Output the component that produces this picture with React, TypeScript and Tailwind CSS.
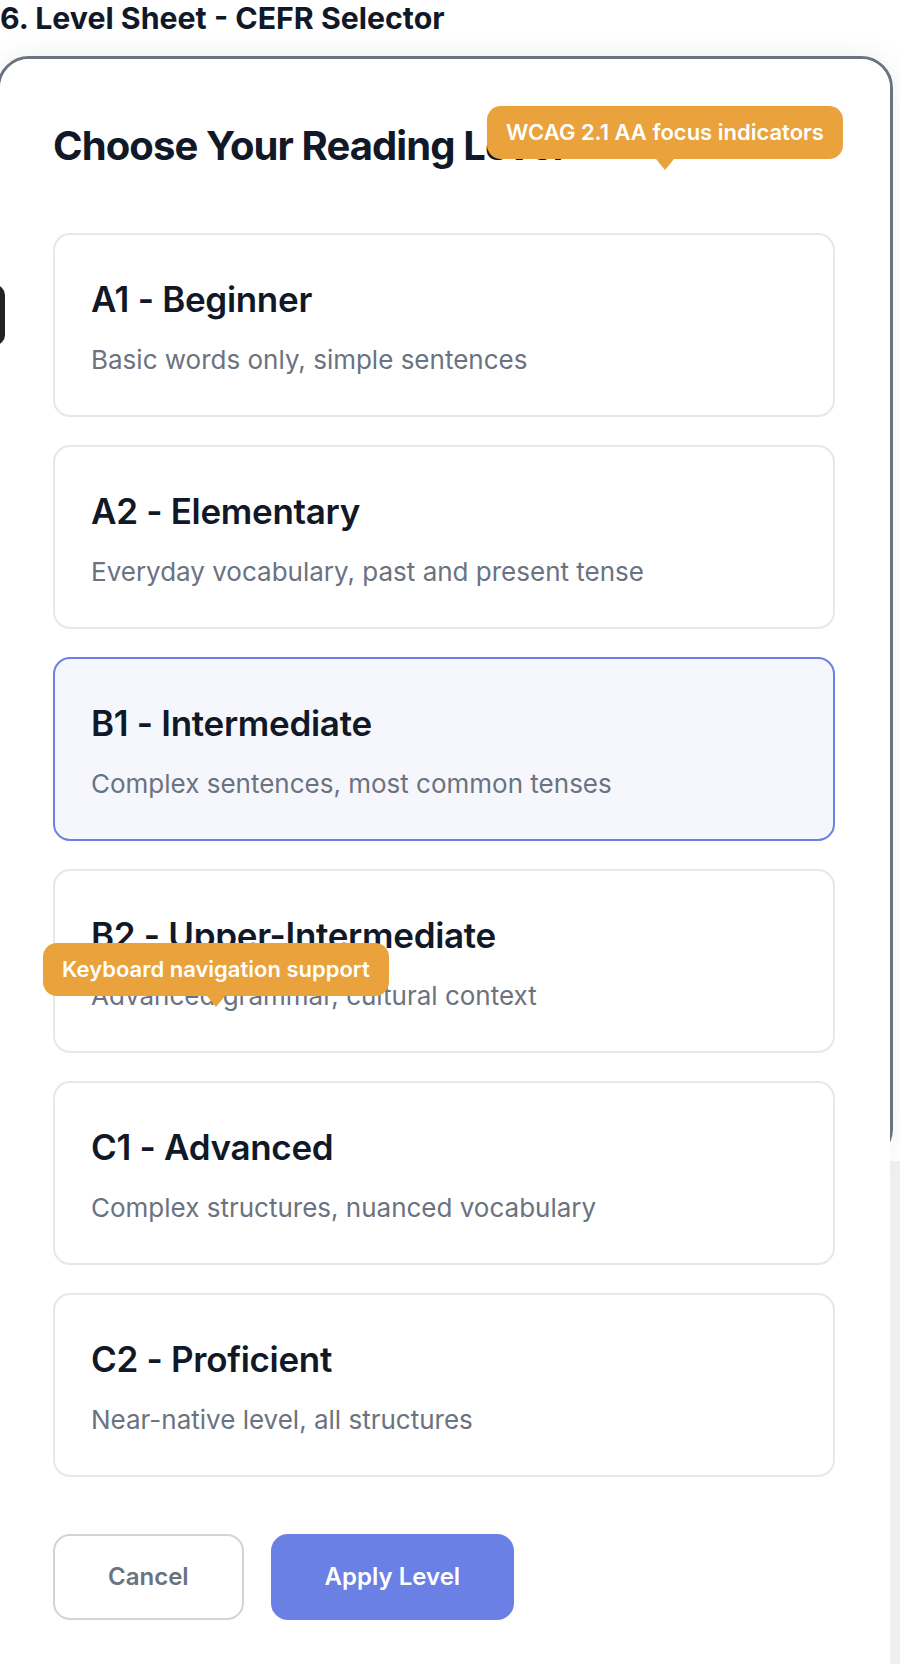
import { useState } from "react"

interface Level {
  code: string
  name: string
  description: string
}

const levels: Level[] = [
  { code: "A1", name: "Beginner", description: "Basic words only, simple sentences" },
  { code: "A2", name: "Elementary", description: "Everyday vocabulary, past and present tense" },
  { code: "B1", name: "Intermediate", description: "Complex sentences, most common tenses" },
  { code: "B2", name: "Upper-Intermediate", description: "Advanced grammar, cultural context" },
  { code: "C1", name: "Advanced", description: "Complex structures, nuanced vocabulary" },
  { code: "C2", name: "Proficient", description: "Near-native level, all structures" }
]

function Note({ text, className }: { text: string; className: string }) {
  return (
    <div
      className={`absolute z-10 whitespace-nowrap rounded-[14px] bg-[#e9a23c] px-[19px] py-[13px] text-[22px] leading-[27px] font-semibold text-white ${className}`}
    >
      {text}
      <div className="absolute left-1/2 top-full -translate-x-1/2 border-x-[9px] border-t-[11px] border-x-transparent border-t-[#e9a23c]" />
    </div>
  )
}

export default function App() {
  const [selected, setSelected] = useState("B1")

  return (
    <div className="relative min-h-[1664px] overflow-hidden bg-white font-['Inter','Noto_Sans',sans-serif] text-[#111827]">
      <h2 className="text-[30.3px] leading-[36px] font-bold">
        6. Level Sheet - CEFR Selector
      </h2>

      <div className="absolute right-0 top-[1161px] bottom-0 w-[10px] bg-[#efefef]" />

      <div className="relative mt-[20px] -ml-[3px] h-[1105px] w-[896px] rounded-[32px] border-[3px] border-[#6b7280] shadow-[0_0_30px_rgba(0,0,0,0.07)]">
        <div className="absolute left-[-60px] top-[226px] z-10 h-[60px] w-[65px] rounded-[10px] bg-[#222222]" />

        <div className="relative flex flex-col rounded-[29px] bg-white pt-[62px] pb-[43px] pl-[53px] pr-[55px]">
          <div className="relative">
            <h1 className="text-[40px] leading-[50px] font-bold tracking-[-0.9px]">
              Choose Your Reading Level
            </h1>
            <Note text="WCAG 2.1 AA focus indicators" className="left-[434px] top-[-15px]" />
          </div>

          <div className="mt-[62px] flex flex-col gap-[28px]">
            {levels.map((level) => {
              const active = selected === level.code
              return (
                <div
                  key={level.code}
                  role="button"
                  tabIndex={0}
                  onClick={() => setSelected(level.code)}
                  className={`relative flex h-[184px] cursor-pointer flex-col rounded-[17px] border-2 px-[36px] pt-[43px] ${
                    active
                      ? "border-[#6b80e4] bg-[#f5f7fd]"
                      : "border-[#e5e7eb] bg-white"
                  }`}
                >
                  <div className="text-[35px] leading-[42px] font-semibold tracking-[-0.3px] text-[#111827]">
                    {level.code} - {level.name}
                  </div>
                  <div className="mt-[24px] text-[26px] leading-[32px] text-[#6b7280]">
                    {level.description}
                  </div>
                  {level.code === "B2" && (
                    <Note text="Keyboard navigation support" className="left-[-12px] top-[72px]" />
                  )}
                </div>
              )
            })}
          </div>

          <div className="mt-[57px] flex gap-[27px]">
            <button className="h-[86px] rounded-[17px] border-2 border-[#d1d5db] bg-white px-[53px] text-[24px] font-semibold text-[#6b7280]">
              Cancel
            </button>
            <button className="h-[86px] rounded-[17px] border-2 border-[#6b80e4] bg-[#6b80e4] px-[52px] text-[24px] font-semibold text-white">
              Apply Level
            </button>
          </div>
        </div>
      </div>
    </div>
  )
}
